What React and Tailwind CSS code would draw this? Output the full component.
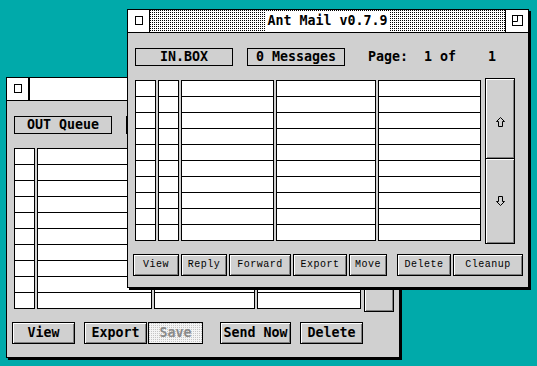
import React from "react";

const big = "font-['DejaVu_Sans_Mono',monospace] font-bold text-[13.3px] leading-none";
const small = "font-['Liberation_Mono',monospace] text-[10px] leading-none";
const bevel = "shadow-[inset_1px_1px_0_#ffffff,inset_-1px_-1px_0_#808080]";

// 1-in-4 pixel dither, used for the active title bar and greyed buttons
function Dither({ id, dot, base }) {
  return (
    <svg className="absolute inset-0 h-full w-full" shapeRendering="crispEdges">
      <defs>
        <pattern id={id} width="2" height="2" patternUnits="userSpaceOnUse">
          <rect width="2" height="2" fill={base} />
          <rect width="1" height="1" fill={dot} />
        </pattern>
      </defs>
      <rect width="100%" height="100%" fill={`url(#${id})`} />
    </svg>
  );
}

function TitleBar({ title, active }) {
  return (
    <div className="flex h-[23px] shrink-0 border-b border-black bg-white">
      <div className="flex w-[22px] items-center justify-center border-r border-black pb-[2px]">
        <div className="h-[9px] w-[8px] border border-black" />
      </div>
      {active ? (
        <div className="relative flex flex-1 items-center justify-center">
          <Dither id="title-dots" dot="#000" base="#fff" />
          <span className={`${big} relative bg-white px-[2px] py-[3px]`}>{title}</span>
        </div>
      ) : (
        <div className="flex-1 border-l border-black" />
      )}
      {active && (
        <div className="flex w-[23px] items-center justify-center border-l border-black">
          <svg width="11" height="11" viewBox="0 0 11 11" className="mb-[1px]">
            <rect x="0.5" y="0.5" width="10" height="10" fill="none" stroke="#000" />
            <path d="M0.5 6.5H5.5V0.5" fill="none" stroke="#000" />
          </svg>
        </div>
      )}
    </div>
  );
}

function Header({ label }) {
  return (
    <div className="ml-[7px] mt-[15px] flex h-[18px] items-center">
      <div className={`${big} flex h-[18px] w-[98px] items-center justify-center border border-black`}>
        {label}
      </div>
      <div className={`${big} ml-[14px] flex h-[18px] w-[98px] items-center justify-center border border-black`}>
        0 Messages
      </div>
      <span className={`${big} ml-[23px] whitespace-pre`}>Page:  1 of    1</span>
    </div>
  );
}

function Column({ width }) {
  return (
    <div className="border-x border-t border-black bg-white" style={{ width }}>
      {Array.from({ length: 10 }).map((_, i) => (
        <div key={i} className="h-[16px] border-b border-black" />
      ))}
    </div>
  );
}

function Arrow({ down }) {
  return (
    <svg width="9" height="10" viewBox="0 0 9 10" className={down ? "rotate-180" : ""}>
      <path d="M4.5 0.5L8.5 4.5H6.5V9.5H2.5V4.5H0.5Z" fill="none" stroke="#000" strokeLinejoin="miter" />
    </svg>
  );
}

function Scroller() {
  return (
    <div className="flex h-[166px] w-[30px] flex-col border border-black">
      <div className={`flex h-[80px] items-center justify-center border-b border-black pt-[6px] ${bevel}`}>
        <Arrow />
      </div>
      <div className={`flex flex-1 items-center justify-center ${bevel}`}>
        <Arrow down />
      </div>
    </div>
  );
}

function Table({ cols, gap }) {
  return (
    <div className="ml-[7px] mt-[12px] flex items-start">
      <div className="mt-[2px] flex gap-[2px]">
        {cols.map((w, i) => (
          <Column key={i} width={w} />
        ))}
      </div>
      <div style={{ marginLeft: gap }}>
        <Scroller />
      </div>
    </div>
  );
}

function SmallButton({ label, w, ml }) {
  return (
    <div
      className={`${small} flex h-[22px] items-center justify-center border border-black tracking-[0.5px] ${bevel}`}
      style={{ width: w, marginLeft: ml }}
    >
      {label}
    </div>
  );
}

function BigButton({ label, w, ml, disabled }) {
  return (
    <div
      className={`${big} relative flex h-[22px] items-center justify-center border border-black ${
        disabled ? "text-[#8a8a8a]" : bevel
      }`}
      style={{ width: w, marginLeft: ml }}
    >
      {disabled && <Dither id="save-dots" dot="#c4c4c4" base="#f4f4f4" />}
      <span className="relative">{label}</span>
    </div>
  );
}

export default function App() {
  return (
    <div className="relative h-[366px] w-[537px] overflow-hidden bg-[#00aaaa]">
      {/* OUT queue window (inactive, behind) */}
      <div className="absolute left-[6px] top-[77px] flex h-[281px] w-[394px] flex-col border border-black bg-[#d0d0d0] shadow-[2px_2px_0_#000]">
        <TitleBar title="OUT Queue" />
        <Header label="OUT Queue" />
        <Table cols={[21, 115, 101, 104]} gap={3} />
        <div className="ml-[5px] mt-[10px] flex">
          <BigButton label="View" w={63} ml={0} />
          <BigButton label="Export" w={63} ml={9} />
          <BigButton label="Save" w={55} ml={1} disabled />
          <BigButton label="Send Now" w={71} ml={17} />
          <BigButton label="Delete" w={63} ml={9} />
        </div>
      </div>

      {/* Inbox window (active, front) */}
      <div className="absolute left-[127px] top-[9px] flex h-[279px] w-[402px] flex-col border border-black bg-[#d0d0d0] shadow-[2px_2px_0_#000]">
        <TitleBar title="Ant Mail v0.7.9" active />
        <Header label="IN.BOX" />
        <Table cols={[21, 21, 93, 100, 103]} gap={4} />
        <div className="ml-[5px] mt-[10px] flex">
          <SmallButton label="View" w={46} ml={0} />
          <SmallButton label="Reply" w={46} ml={2} />
          <SmallButton label="Forward" w={62} ml={2} />
          <SmallButton label="Export" w={54} ml={2} />
          <SmallButton label="Move" w={38} ml={2} />
          <SmallButton label="Delete" w={54} ml={10} />
          <SmallButton label="Cleanup" w={70} ml={2} />
        </div>
      </div>
    </div>
  );
}
